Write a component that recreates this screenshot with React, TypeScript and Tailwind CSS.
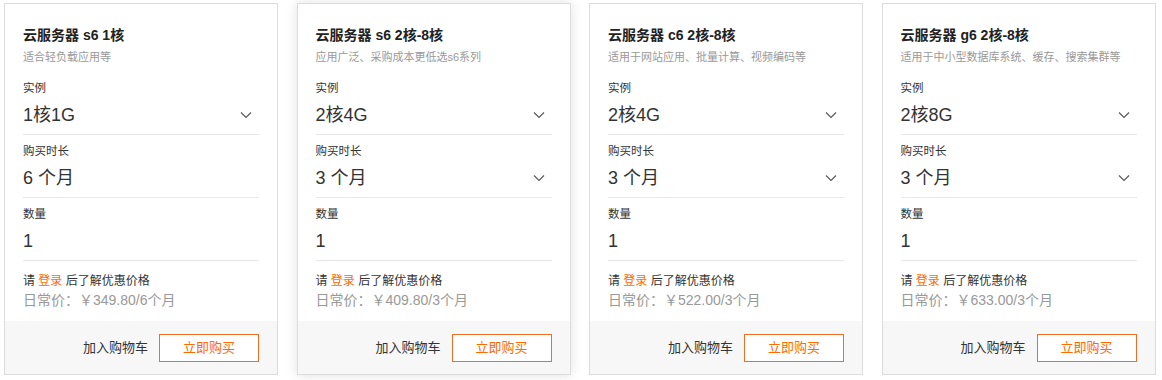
import React from "react";

type Card = {
  title: string;
  desc: string;
  instance: string;
  duration: string;
  durationSelect: boolean;
  price: string;
  hover?: boolean;
};

const cards: Card[] = [
  { title: "云服务器 s6 1核", desc: "适合轻负载应用等", instance: "1核1G", duration: "6 个月", durationSelect: false, price: "349.80/6个月" },
  { title: "云服务器 s6 2核-8核", desc: "应用广泛、采购成本更低选s6系列", instance: "2核4G", duration: "3 个月", durationSelect: true, price: "409.80/3个月", hover: true },
  { title: "云服务器 c6 2核-8核", desc: "适用于网站应用、批量计算、视频编码等", instance: "2核4G", duration: "3 个月", durationSelect: true, price: "522.00/3个月" },
  { title: "云服务器 g6 2核-8核", desc: "适用于中小型数据库系统、缓存、搜索集群等", instance: "2核8G", duration: "3 个月", durationSelect: true, price: "633.00/3个月" },
];

function Chevron() {
  return (
    <svg width="12" height="8" viewBox="0 0 12 8" className="mr-[7px]">
      <polyline points="1,1.5 6,6.5 11,1.5" fill="none" stroke="#555" strokeWidth="1.1" />
    </svg>
  );
}

function Section({ label, value, select }: { label: string; value: string; select: boolean }) {
  return (
    <div className="pt-[8px] pb-[7px] border-b border-[#e8e8e8]">
      <div className="text-[11.5px] leading-[16px] text-[#333]">{label}</div>
      <div className="mt-[7px] h-[24px] flex items-center justify-between">
        <span className="text-[18px] leading-[24px] text-[#333]">{value}</span>
        {select && <Chevron />}
      </div>
    </div>
  );
}

function ProductCard({ c }: { c: Card }) {
  return (
    <div
      className={
        "w-[274px] h-[372px] border border-[#dcdcdc] bg-white flex flex-col " +
        (c.hover ? "shadow-[0_0_12px_rgba(0,0,0,0.12)]" : "")
      }
    >
      <div className="px-[18px] pt-[21px] flex-1">
        <div className="text-[14px] leading-[20px] font-bold text-[#222]">{c.title}</div>
        <div className="mt-[4px] text-[11px] leading-[16px] text-[#999] whitespace-nowrap">{c.desc}</div>
        <div className="mt-[7px]">
          <Section label="实例" value={c.instance} select={true} />
          <Section label="购买时长" value={c.duration} select={c.durationSelect} />
          <Section label="数量" value="1" select={false} />
        </div>
        <div className="mt-[11px] text-[12px] leading-[18px] text-[#333]">
          请 <span className="text-[#ff6a00]">登录</span> 后了解优惠价格
        </div>
        <div className="text-[14px] leading-[20px] text-[#999]">日常价：￥{c.price}</div>
      </div>
      <div className="h-[53px] bg-[#f7f7f7] flex items-center justify-end pr-[18px]">
        <span className="text-[13px] text-[#333] mr-[11px]">加入购物车</span>
        <button className="w-[100px] h-[28px] border border-[#ed6f27] bg-white text-[13px] text-[#ff6a00]">
          立即购买
        </button>
      </div>
    </div>
  );
}

export default function App() {
  return (
    <div
      className="w-[1162px] h-[380px] bg-white pl-[4px] pt-[3px] flex gap-[18.5px]"
      style={{ fontFamily: '"Liberation Sans", "Noto Sans CJK SC", sans-serif' }}
    >
      {cards.map((c, i) => (
        <ProductCard key={i} c={c} />
      ))}
    </div>
  );
}
